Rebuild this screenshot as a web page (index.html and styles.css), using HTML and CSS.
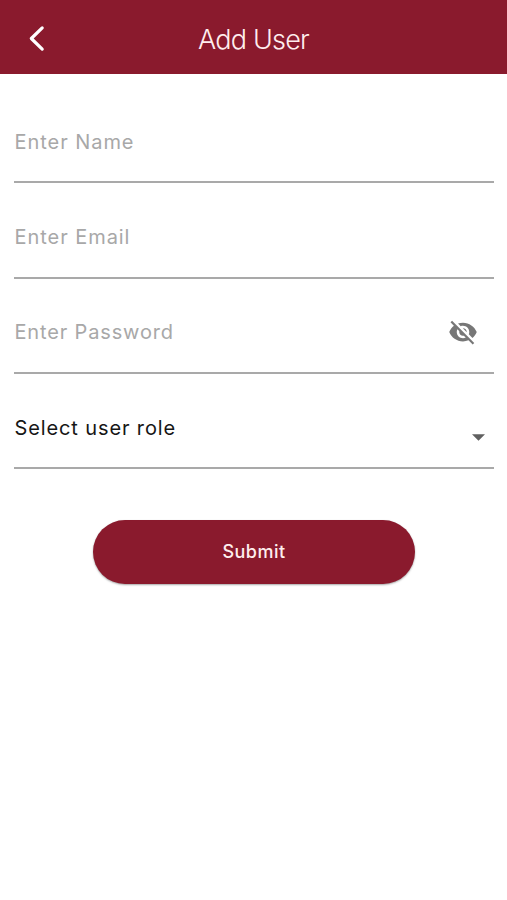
FILE: index.html
```html
<!DOCTYPE html>
<html lang="en">
<head>
<meta charset="utf-8">
<title>Add User</title>
<link rel="stylesheet" href="styles.css">
</head>
<body>
<header class="bar">
  <button class="back" type="button" aria-label="Back"><svg width="18" height="28" viewBox="0 0 18 28"><path d="M14.2 2.9 3.3 13.5l10.9 10.6"/></svg></button>
  <h1 class="title">Add User</h1>
</header>
<main class="form">
  <div class="field"><span class="label">Enter Name</span></div>
  <div class="field email"><span class="label">Enter Email</span></div>
  <div class="field"><span class="label password">Enter Password</span>
    <svg class="eye" viewBox="0 0 24 24"><path d="M12 7c2.76 0 5 2.24 5 5 0 .65-.13 1.26-.36 1.83l2.92 2.92c1.51-1.26 2.7-2.89 3.43-4.75-1.73-4.39-6-7.5-11-7.5-1.4 0-2.74.25-3.98.7l2.16 2.16C10.74 7.13 11.35 7 12 7zM2 4.27l2.28 2.28.46.46C3.08 8.3 1.78 10.02 1 12c1.73 4.39 6 7.5 11 7.5 1.55 0 3.03-.3 4.38-.84l.42.42L19.73 22 21 20.73 3.27 3 2 4.27zM7.53 9.8l1.55 1.55c-.05.21-.08.43-.08.65 0 1.66 1.34 3 3 3 .22 0 .44-.03.65-.08l1.55 1.55c-.67.33-1.41.53-2.2.53-2.76 0-5-2.24-5-5 0-.79.2-1.53.53-2.2zm4.31-.78 3.15 3.15.02-.16c0-1.66-1.34-3-3-3l-.17.01z"/></svg>
  </div>
  <div class="field role"><span class="label">Select user role</span>
    <svg class="caret" viewBox="0 0 14 7"><path d="M0 0h14L7 7z"/></svg>
  </div>
  <button class="submit" type="button">Submit</button>
</main>
</body>
</html>
```

FILE: styles.css
```css
* { box-sizing: border-box; }
body { margin: 0; min-height: 900px; background: #fff; font-family: Inter, sans-serif; }
.bar { height: 74px; display: grid; grid-template-columns: 74px 1fr 74px; align-items: center; background: #8a1a2d; color: #fff; padding-top: 4px; }
.back { display: flex; justify-content: center; border: 0; padding: 0; background: none; }
.back path { fill: none; stroke: #fff; stroke-width: 3.2; stroke-linecap: round; stroke-linejoin: round; }
.title { margin: 0; padding-top: 2px; text-align: center; font-size: 27px; line-height: 34px; font-weight: 300; letter-spacing: -0.8px; color: #ffeeee; }
.form { display: flex; flex-direction: column; padding: 14px 13px 0 14px; }
.field { height: 95.3px; display: flex; align-items: flex-end; justify-content: space-between; padding-bottom: 26px; border-bottom: 2px solid #a9a9a9; color: #a8a8a8; }
.label { padding-left: 0.5px; font-size: 20px; line-height: 26px; letter-spacing: 0.95px; }
.email { padding-bottom: 27px; }
.password { letter-spacing: 0.85px; padding-bottom: 1px; }
.eye { width: 30px; height: 30px; margin: 0 16px -1px 0; fill: #777; }
.role { color: #161616; }
.role .label { letter-spacing: 0.88px; }
.caret { width: 13px; height: 7px; margin: 0 9px 0 0; fill: #606060; }
.submit { align-self: center; width: 322px; height: 64px; margin-top: 51px; padding: 0; border: 0; border-radius: 32px; background: #8a1a2d; color: #ffeeee; font: 500 18px/24px Inter, sans-serif; letter-spacing: .5px; box-shadow: 0 1px 2px rgba(0,0,0,.35); }
```
